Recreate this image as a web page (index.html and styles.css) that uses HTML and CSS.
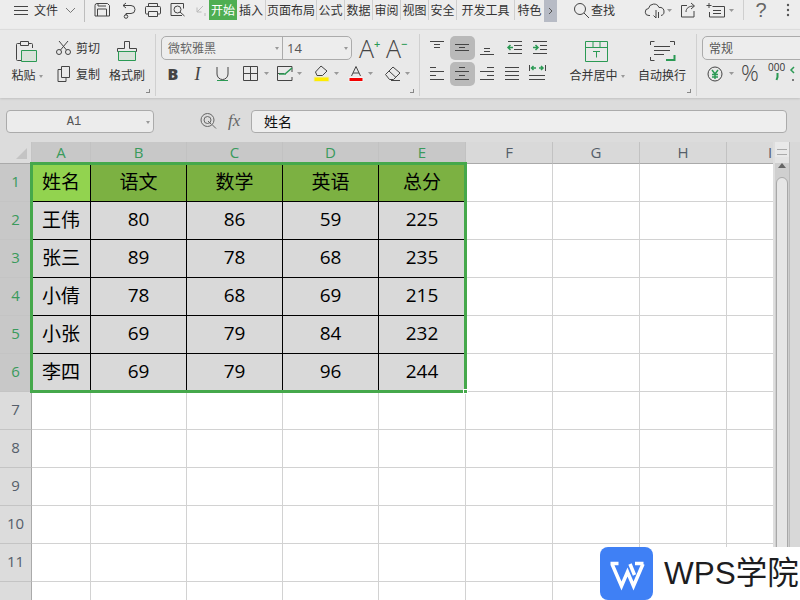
FILE: index.html
```html
<!DOCTYPE html>
<html lang="zh">
<head>
<meta charset="utf-8">
<title>WPS 表格</title>
<link rel="stylesheet" href="styles.css">
</head>
<body>
<div class="app">
  <header class="titlebar">
    <svg width="34" height="20" viewBox="0 0 34 20"><path d="M14 6.500h14M14 10.500h14M14 14.500h14"/></svg>
    <span class="tb-text">文件</span>
    <svg width="26" height="20" viewBox="0 0 26 20"><path class="lt" d="M8 8l4.500 4.500L17 8"/></svg>
    <i class="tb-sep"></i>
    <svg width="30" height="20" viewBox="0 0 30 20"><path d="M12 3.500h10.500l2 2v10.500h-14.500v-10.500a2 2 0 0 1 2-2zM12.500 16v-7h9v7M13 3.500v2.500h8"/></svg>
    <svg width="27" height="20" viewBox="0 0 27 20"><path d="M8 5.500h8a4 4 0 0 1 0 8h-5v2M11 3l-3 2.500 3 2.500"/><circle cx="11" cy="16.500" r="1.800"/></svg>
    <svg width="25" height="20" viewBox="0 0 25 20"><path d="M6.500 6.500v-3h9v3M6.500 14h-2a1 1 0 0 1-1-1v-5.500a1 1 0 0 1 1-1h13a1 1 0 0 1 1 1v5.500a1 1 0 0 1-1 1h-2M6.500 11.500h9v5h-9z"/></svg>
    <svg width="25" height="20" viewBox="0 0 25 20"><path d="M15 15.500h-11v-12h12.500v5"/><circle cx="10.500" cy="9.500" r="3.500"/><path d="M13 12l4.500 4"/></svg>
    <svg width="17" height="20" viewBox="0 0 17 20"><path class="faint" d="M11 6l-6 6M5 7.500V12h4.500M13 13v3"/></svg>
    <nav class="tabs">
      <span class="tab on">开始</span>
      <span class="tab">插入</span>
      <span class="tab wide4">页面布局</span>
      <span class="tab">公式</span>
      <span class="tab">数据</span>
      <span class="tab">审阅</span>
      <span class="tab">视图</span>
      <span class="tab">安全</span>
      <span class="tab wide5">开发工具</span>
      <span class="tab last">特色</span>
    </nav>
    <span class="more"><svg width="13" height="20" viewBox="0 0 13 20"><path d="M5 8l3 3-3 3"/></svg></span>
    <svg width="34" height="20" viewBox="0 0 34 20"><circle cx="23" cy="9" r="5.500"/><path d="M27 13l5 5"/></svg>
    <span class="tb-text">查找</span>
    <svg width="57" height="20" viewBox="0 0 57 20"><path d="M35 15.500h-1a3.500 3.500 0 0 1-.5-7 5.500 5.500 0 0 1 10.500-1 4 4 0 0 1 5 4.500c0 2-1 3-3 3.500M41 10v8M38.500 15.500l2.500 2.500M43.500 12v6"/><path class="tri" d="M52 9h5l-2.500 3z"/></svg>
    <svg width="28" height="20" viewBox="0 0 28 20"><path d="M15 5.500h-5.500v11.500h12.500v-6M14 12c0-4 3-6 8-6M19 3l3.500 3-3.500 3"/></svg>
    <svg width="42" height="20" viewBox="0 0 42 20"><path d="M9 8v-5M6.500 5.500h5M12.500 6.500h12v10.500h-15v-5M13 10.500h8M13 13.500h8"/><path class="tri" d="M29 9h5l-2.500 3z"/></svg>
    <i class="tb-sep short"></i>
    <span class="help">?</span>
    <svg width="24" height="20" viewBox="0 0 24 20"><circle class="dot" cx="12" cy="5" r="1.200"/><circle class="dot" cx="12" cy="10" r="1.200"/><circle class="dot" cx="12" cy="15" r="1.200"/></svg>
  </header>

  <section class="ribbon">
    <div class="group g1">
      <div class="col c-paste">
        <svg width="49" height="26" viewBox="0 0 49 26"><path d="M20.500 5.500h-3a1 1 0 0 0-1 1v15a1 1 0 0 0 1 1h4M32.500 10v-3.500a1 1 0 0 0-1-1h-3M20.500 3.500h8v4h-8z"/><path class="gfill" d="M21.500 12.500h15v11h-15z"/></svg>
        <span class="lbl">粘贴<b class="caret"></b></span>
      </div>
      <div class="col c-cut">
        <div class="cut-row">
          <svg width="15" height="18" viewBox="0 0 15 18"><circle cx="3" cy="13" r="2.500"/><circle cx="12" cy="13" r="2.500"/><path d="M4.500 11L12 2M10.500 11L3 2"/></svg>
          <span>剪切</span>
        </div>
        <div class="cut-row">
          <svg width="15" height="18" viewBox="0 0 15 18"><path d="M5.500 1.500h8v11h-8zM5.500 4.500h-3.500v12h8v-4"/></svg>
          <span>复制</span>
        </div>
      </div>
      <div class="col c-brush">
        <svg width="44" height="26" viewBox="0 0 44 26"><path d="M19.500 3.500h5v7h7v3h-19v-3h7z"/><path class="gfill" d="M13.500 13.500h17v9h-17z"/></svg>
        <span class="lbl">格式刷</span>
      </div>
      <i class="corner"></i>
    </div>
    <i class="r-sep"></i>
    <div class="group g2">
      <div class="font-row">
        <div class="combo">
          <span class="fname">微软雅黑<b class="caret"></b></span>
          <span class="fsize">14<b class="caret"></b></span>
        </div>
        <span class="big-a">A<sup class="plus">+</sup></span>
        <span class="big-a">A<sup class="plus">−</sup></span>
      </div>
      <div class="fmt-row">
        <span class="fb">B</span>
        <span class="fi">I</span>
        <svg width="25" height="18" viewBox="0 0 25 18"><path d="M7 2v7a5 5 0 0 0 11 0V2"/><path class="green" d="M7 15.500h11"/></svg>
        <svg width="40" height="18" viewBox="0 0 40 18"><path d="M8.500 1.500h14v14h-14zM15.500 1.500v14M8.500 8.500h14"/><path class="tri" d="M29 7h5l-2.500 3z"/></svg>
        <svg width="37" height="18" viewBox="0 0 37 18"><path d="M17 7V1.500H2.500V15.500H17V12M2.500 8.500H9"/><path class="green2" d="M4 9h7M10 9l7-6"/><path class="tri" d="M22 7h5l-2.500 3z"/></svg>
        <svg width="36" height="18" viewBox="0 0 36 18"><path d="M9 1l6 5-4.500 4.500H5L3.500 7z"/><path class="yellow" d="M2 12h15v4.500H2z"/><path class="tri" d="M22 7h5l-2.500 3z"/></svg>
        <svg width="36" height="18" viewBox="0 0 36 18"><path d="M3.500 11L8 1.500l4.500 9.500M5 8h6"/><path class="red" d="M1 12.500h14v4H1z"/><path class="tri" d="M20 7h5l-2.500 3z"/></svg>
        <svg width="31" height="18" viewBox="0 0 31 18"><path d="M1.500 9.500L9 2l7 6-6.500 6.500h-4zM5 6l7 6.500M7 15.500h9"/><path class="tri" d="M21 7h5l-2.500 3z"/></svg>
      </div>
      <i class="corner"></i>
    </div>
    <i class="r-sep"></i>
    <div class="group g3">
      <div class="align-grid">
        <svg width="25" height="24" viewBox="0 0 25 24"><path d="M5 5.500h14M9 8.500h6M9 11.500h6"/></svg>
        <svg class="active" width="25" height="24" viewBox="0 0 25 24"><path d="M5 8.500h14M9 11.500h6M5 14.500h14"/></svg>
        <svg width="25" height="24" viewBox="0 0 25 24"><path d="M9 12.500h6M9 15.500h6M5 18.500h14"/></svg>
        <svg width="25" height="24" viewBox="0 0 25 24"><path d="M8 5.500h14M14 9.500h8M14 13.500h8M8 17.500h14"/><path class="green2" d="M13 11.500H8M10.500 9L8 11.500l2.500 2.500"/></svg>
        <svg width="25" height="24" viewBox="0 0 25 24"><path d="M8 5.500h14M15 9.500h7M15 13.500h7M8 17.500h14"/><path class="green2" d="M8 11.500h5M10.500 9l2.500 2.500-2.500 2.500"/></svg>
        <svg width="25" height="24" viewBox="0 0 25 24"><path d="M5 5.500h6M5 9.500h14M5 13.500h6M5 17.500h14"/></svg>
        <svg class="active" width="25" height="24" viewBox="0 0 25 24"><path d="M9 5.500h6M5 9.500h14M9 13.500h6M5 17.500h14"/></svg>
        <svg width="25" height="24" viewBox="0 0 25 24"><path d="M12 5.500h7M5 9.500h14M12 13.500h7M5 17.500h14"/></svg>
        <svg width="25" height="24" viewBox="0 0 25 24"><path d="M5 5.500h14M5 9.500h14M5 13.500h14M5 17.500h14"/></svg>
        <svg width="25" height="24" viewBox="0 0 25 24"><path d="M4.500 3v6M20.500 3v6M4 13.500h16M4 17.500h16"/><path class="green2" d="M7 6h4M8.500 4L6.500 6l2 2M14 6h4M16 4l2 2-2 2"/></svg>
      </div>
      <div class="col c-merge">
        <svg width="80" height="26" viewBox="0 0 80 26"><path class="green" d="M28.500 3.500h22v20h-22zM28.500 9.500h22M36 3.500v6M43 3.500v6M36 13.500h7M39.500 13.500v6"/></svg>
        <span class="lbl">合并居中<b class="caret"></b></span>
      </div>
      <div class="col c-wrap">
        <svg width="50" height="26" viewBox="0 0 50 26"><path d="M13.500 7V3.500h4M33 3.500h4.500V7M13.500 19v3.500h4M17 8.500h16M17 12.500h16M17 16.500h10"/><path class="green3" d="M37.500 17v5H29"/></svg>
        <span class="lbl">自动换行</span>
      </div>
      <i class="corner"></i>
    </div>
    <i class="r-sep"></i>
    <div class="group g4">
      <div class="numfmt">常规</div>
      <div class="fmt-row">
        <svg width="24" height="18" viewBox="0 0 24 18"><circle cx="13" cy="9" r="7"/><path class="green2" d="M10 5l3 4 3-4M13 9v5M10 9.500h6M10 12h6"/></svg>
        <svg width="12" height="18" viewBox="0 0 12 18"><path class="tri" d="M3 7h5l-2.500 3z"/></svg>
        <span class="pct">%</span>
        <span class="thou">000<svg class="tick" width="8" height="8" viewBox="0 0 8 8"><path class="green3" d="M4.500 0v4l-1 3"/></svg></span>
        <svg width="12" height="18" viewBox="0 0 12 18"><path class="green2" d="M6 2L3 5l3 3"/><circle class="dot" cx="5" cy="15" r="1"/></svg>
      </div>
    </div>
  </section>

  <section class="formula">
    <div class="namebox">A1<b class="caret"></b></div>
    <svg class="zoom" width="68" height="23" viewBox="0 0 68 23"><circle cx="53.500" cy="10" r="6.500"/><circle cx="53.500" cy="10" r="3.500"/><path d="M58 14.500l4 4M54 11l3 3"/></svg>
    <span class="fx">fx</span>
    <div class="finput">姓名</div>
  </section>

  <main class="sheet">
    <div class="grid">
      <div class="corner-cell"><i class="tri-corner"></i></div>
      <div class="ch sel">A</div><div class="ch sel">B</div><div class="ch sel">C</div><div class="ch sel">D</div><div class="ch sel">E</div>
      <div class="ch">F</div><div class="ch">G</div><div class="ch">H</div><div class="ch">I</div>

      <div class="rh sel">1</div>
      <div class="c d head first">姓名</div><div class="c d head">语文</div><div class="c d head">数学</div><div class="c d head">英语</div><div class="c d head">总分</div>
      <div class="c"></div><div class="c"></div><div class="c"></div><div class="c"></div>

      <div class="rh sel">2</div>
      <div class="c d">王伟</div><div class="c d">80</div><div class="c d">86</div><div class="c d">59</div><div class="c d">225</div>
      <div class="c"></div><div class="c"></div><div class="c"></div><div class="c"></div>

      <div class="rh sel">3</div>
      <div class="c d">张三</div><div class="c d">89</div><div class="c d">78</div><div class="c d">68</div><div class="c d">235</div>
      <div class="c"></div><div class="c"></div><div class="c"></div><div class="c"></div>

      <div class="rh sel">4</div>
      <div class="c d">小倩</div><div class="c d">78</div><div class="c d">68</div><div class="c d">69</div><div class="c d">215</div>
      <div class="c"></div><div class="c"></div><div class="c"></div><div class="c"></div>

      <div class="rh sel">5</div>
      <div class="c d">小张</div><div class="c d">69</div><div class="c d">79</div><div class="c d">84</div><div class="c d">232</div>
      <div class="c"></div><div class="c"></div><div class="c"></div><div class="c"></div>

      <div class="rh sel">6</div>
      <div class="c d">李四</div><div class="c d">69</div><div class="c d">79</div><div class="c d">96</div><div class="c d">244</div>
      <div class="c"></div><div class="c"></div><div class="c"></div><div class="c"></div>

      <div class="rh">7</div>
      <div class="c"></div><div class="c"></div><div class="c"></div><div class="c"></div><div class="c"></div><div class="c"></div><div class="c"></div><div class="c"></div><div class="c"></div>
      <div class="rh">8</div>
      <div class="c"></div><div class="c"></div><div class="c"></div><div class="c"></div><div class="c"></div><div class="c"></div><div class="c"></div><div class="c"></div><div class="c"></div>
      <div class="rh">9</div>
      <div class="c"></div><div class="c"></div><div class="c"></div><div class="c"></div><div class="c"></div><div class="c"></div><div class="c"></div><div class="c"></div><div class="c"></div>
      <div class="rh">10</div>
      <div class="c"></div><div class="c"></div><div class="c"></div><div class="c"></div><div class="c"></div><div class="c"></div><div class="c"></div><div class="c"></div><div class="c"></div>
      <div class="rh">11</div>
      <div class="c"></div><div class="c"></div><div class="c"></div><div class="c"></div><div class="c"></div><div class="c"></div><div class="c"></div><div class="c"></div><div class="c"></div>
      <div class="rh"></div>
      <div class="c"></div><div class="c"></div><div class="c"></div><div class="c"></div><div class="c"></div><div class="c"></div><div class="c"></div><div class="c"></div><div class="c"></div>

      <div class="selection"><i class="handle"></i></div>
    </div>
    <aside class="vscroll">
      <div class="grip"></div>
      <div class="track">
        <i class="up"></i>
        <div class="thumb"></div>
      </div>
    </aside>
    <div class="rail"></div>
  </main>

  <div class="brand">
    <span class="brand-logo">
      <svg width="53" height="53" viewBox="0 0 53 53"><path d="M10.500 16.500h8M35 16.500h8.500M12 17l9.500 22 6-14 6 14 9.500-22M30 17l4.500 11"/></svg>
    </span>
    <span class="brand-text">WPS学院</span>
  </div>
</div>
</body>
</html>
```
FILE: styles.css
```css
* { box-sizing: border-box; }
html, body { margin: 0; padding: 0; }
body {
  width: 800px;
  height: 600px;
  overflow: hidden;
  font-family: "Noto Sans CJK SC", "Noto Sans", sans-serif;
  font-size: 12px;
  color: #333;
  background: #e9e9e9;
}
i, b { font-style: normal; font-weight: 400; }
svg { display: block; flex: none; fill: none; stroke: #444; stroke-width: 1; }
svg .lt { stroke: #777; }
svg .faint { stroke: #bbb; }
svg .tri { fill: #999; stroke: none; }
svg .dot { fill: #555; stroke: none; }
svg .green { stroke: #2b9a54; }
svg .green2 { stroke: #2b9a54; stroke-width: 1.500; }
svg .green3 { stroke: #2b9a54; stroke-width: 2; }
svg .gfill { stroke: #2b9a54; fill: #d9e3da; }
svg .yellow { fill: #ffec00; stroke: #e8e8c0; }
svg .red { fill: #f40000; stroke: #f4f4f4; }

.app { position: relative; width: 800px; height: 600px; overflow: hidden; }

/* title bar */
.titlebar {
  display: flex;
  align-items: flex-start;
  height: 29px;
  background: #ededed;
  line-height: 20px;
}
.tb-text { width: 24px; flex: none; }
.tb-sep { width: 1px; height: 22px; background: #bdbdbd; flex: none; }
.tb-sep.short { height: 20px; background: #cfcfcf; margin-left: 1px; }
.tabs { display: flex; height: 20px; }
.tab { width: 29px; text-align: center; border-right: 1px solid #cfcfcf; white-space: nowrap; }
.tab.on { width: 28px; background: #4fae52; color: #fff; border-right: 0; }
.tab.wide4 { width: 51px; }
.tab.wide5 { width: 58px; }
.tab:nth-child(4), .tab:nth-child(5), .tab:nth-child(6), .tab:nth-child(7), .tab:nth-child(8) { width: 28px; }
.tab.last { width: 29px; border-right: 0; }
.more { width: 13px; height: 22px; background: #b7bbc5; flex: none; }
.more svg { stroke: #555; }
.help { width: 32px; flex: none; text-align: center; font-family: "Liberation Sans", sans-serif; font-size: 20px; line-height: 20px; color: #666; padding-left: 2px; }

/* ribbon */
.ribbon {
  display: flex;
  height: 69px;
  background: #e9e9e9;
  border-top: 1px solid #dcdcdc;
  box-shadow: 0 1px 2px rgba(0, 0, 0, .12);
  position: relative;
}
.group { position: relative; flex: none; height: 68px; }
.g1 { width: 155px; display: flex; }
.g2 { width: 263px; padding: 6px 0 0 5px; }
.g3 { width: 276px; display: flex; padding-left: 5px; }
.g4 { flex: 1; min-width: 0; padding: 6px 0 0 5px; overflow: hidden; }
.r-sep { width: 1px; flex: none; margin: 4px 0 2px; background: #d0d0d0; }
.corner {
  position: absolute;
  right: 5px;
  bottom: 5px;
  width: 4px;
  height: 4px;
  border-right: 1px solid #888;
  border-bottom: 1px solid #888;
}
.col { display: flex; flex-direction: column; align-items: center; padding-top: 8px; flex: none; }
.lbl { display: block; margin-top: 1px; line-height: 20px; white-space: nowrap; }
.c-paste { width: 49px; }
.c-paste .lbl { margin-left: 5px; }
.c-cut { width: 56px; padding: 9px 0 0 7px; align-items: flex-start; gap: 8px; }
.c-brush { width: 44px; }
.c-merge { width: 80px; margin-left: 7px; }
.c-wrap { width: 50px; }
.cut-row { display: flex; align-items: center; gap: 5px; line-height: 18px; }
.caret {
  display: inline-block;
  width: 0;
  height: 0;
  margin-left: 3px;
  vertical-align: middle;
  border: 2.500px solid transparent;
  border-top: 3px solid #999;
  border-bottom: 0;
}

.font-row { display: flex; align-items: center; height: 24px; }
.combo {
  display: flex;
  width: 191px;
  height: 24px;
  background: #ededed;
  border: 1px solid #ababab;
  border-radius: 5px;
  line-height: 22px;
}
.fname { width: 121px; padding: 0 3px 0 6px; border-right: 1px solid #ababab; color: #666; display: flex; align-items: center; justify-content: space-between; }
.fsize { flex: 1; padding: 0 3px 0 4px; color: #555; display: flex; align-items: center; justify-content: space-between; font-family: "Open Sans", sans-serif; font-size: 13px; }
.big-a { width: 27px; padding-left: 7px; flex: none; font-family: "Open Sans", sans-serif; font-weight: 300; font-size: 25px; line-height: 24px; color: #444; white-space: nowrap; }
.plus { font-size: 11px; line-height: 0; color: #2b9a54; font-weight: 600; vertical-align: 10px; }
.fmt-row { display: flex; align-items: center; height: 18px; margin-top: 5px; }
.fb { width: 24px; flex: none; text-align: center; font-family: "Open Sans", sans-serif; font-weight: 800; font-size: 16px; line-height: 18px; color: #444; }
.fi { width: 25px; flex: none; text-align: center; font-family: "Liberation Serif", serif; font-style: italic; font-size: 18px; line-height: 18px; color: #444; }
.align-grid { display: grid; grid-template-columns: repeat(5, 25px); grid-template-rows: 24px 24px; gap: 2px 0; padding-top: 6px; flex: none; align-content: start; }
.align-grid .active { background: #b9b9b9; border-radius: 5px; }
.numfmt {
  width: 130px;
  height: 24px;
  padding-left: 6px;
  background: #ededed;
  border: 1px solid #ababab;
  border-radius: 5px;
  line-height: 22px;
  color: #555;
}
.pct { width: 24px; height: 18px; flex: none; text-align: center; font-family: "Open Sans", sans-serif; font-weight: 300; font-size: 22px; line-height: 14px; color: #444; }
.thou { width: 26px; height: 18px; flex: none; padding-left: 6px; margin-top: -6px; font-family: "Open Sans", sans-serif; font-size: 10px; line-height: 10px; color: #333; white-space: nowrap; }
.tick { margin: 1px 0 0 5px; }

/* formula bar */
.formula {
  display: flex;
  align-items: flex-start;
  height: 44px;
  padding: 12px 0 0 6px;
  background: #dcdcdc;
}
.namebox {
  display: flex;
  align-items: center;
  justify-content: center;
  width: 148px;
  height: 23px;
  padding-right: 12px;
  position: relative;
  background: #ececec;
  border: 1px solid #ababab;
  border-radius: 4px;
  font-family: "Liberation Mono", monospace;
  font-size: 12px;
  color: #555;
}
.namebox .caret { position: absolute; right: 3px; top: 10px; }
.zoom { stroke: #666; }
.fx { width: 29px; flex: none; padding-left: 6px; font-family: "Liberation Serif", serif; font-style: italic; font-size: 17px; line-height: 22px; color: #666; }
.finput {
  width: 536px;
  height: 23px;
  padding-left: 12px;
  background: #eee;
  border: 1px solid #ababab;
  border-radius: 4px;
  font-size: 14px;
  line-height: 21px;
  color: #111;
}

/* sheet */
.sheet { display: flex; height: 458px; background: #fff; }
.grid {
  position: relative;
  width: 773px;
  height: 458px;
  flex: none;
  overflow: hidden;
  display: grid;
  grid-template-columns: 32px 59px 96px 96px 96px 87px 87px 87px 87px 87px;
  grid-template-rows: 22px repeat(12, 38px);
  font-family: "Open Sans", "Noto Sans CJK SC", sans-serif;
}
.corner-cell { position: relative; background: #dcdcdc; border-right: 1px solid #c4c4c4; border-bottom: 1px solid #aaa; }
.tri-corner {
  position: absolute;
  left: 16px;
  top: 6px;
  border-left: 11px solid transparent;
  border-bottom: 11px solid #c4c4c4;
}
.ch {
  display: flex;
  align-items: center;
  justify-content: center;
  background: #d9d9d9;
  border-right: 1px solid #c2c2c2;
  border-bottom: 1px solid #aaa;
  font-size: 15px;
  color: #555e6a;
  padding-bottom: 1px;
}
.rh {
  display: flex;
  align-items: center;
  justify-content: center;
  background: #dcdcdc;
  border-right: 1px solid #aaa;
  border-bottom: 1px solid #c4c4c4;
  font-size: 15px;
  color: #555e6a;
  padding-bottom: 3px;
}
.ch.sel, .rh.sel { background: #c8c8c8; color: #3a9a5c; }
.c { border-right: 1px solid #d2d2d2; border-bottom: 1px solid #d2d2d2; background: #fff; }
.c.d {
  display: flex;
  align-items: center;
  justify-content: center;
  background: #d9d9d9;
  border-color: #000;
  font-size: 19px;
  color: #000;
  padding-bottom: 3px;
}
.c.head { background: #7cb142; }
.c.head.first { background: #92d34f; }
.selection {
  position: absolute;
  left: 30px;
  top: 20px;
  width: 437px;
  height: 231px;
  border: 3px solid #45a84b;
}
.handle {
  position: absolute;
  right: -4px;
  bottom: -4px;
  width: 5px;
  height: 5px;
  background: #45a84b;
  border: 1px solid #fff;
}

.vscroll { width: 16px; flex: none; background: #e4e4e4; border-left: 2px solid #dedede; }
.grip { height: 15px; padding-top: 7px; background: #e9e9e9; }
.grip::before { content: ""; display: block; margin: 0 2px; height: 4px; border-top: 1px solid #aaa; border-bottom: 1px solid #aaa; }
.track { height: 443px; background: #cfcfcf; padding: 0 1px; }
.up {
  display: block;
  width: 0;
  margin: 6px auto 0;
  border: 4px solid transparent;
  border-bottom: 5px solid #666;
  border-top: 0;
}
.thumb { margin-top: 9px; height: 423px; background: #e6e6e6; border: 1px solid #a8a8a8; border-radius: 7px 7px 0 0; }
.rail { flex: 1; background: #d8d8d8; border-left: 1px solid #bbb; }

/* watermark */
.brand {
  position: absolute;
  right: 0;
  bottom: 0;
  display: flex;
  align-items: center;
  width: 200px;
  height: 53px;
  background: #fff;
}
.brand-logo { width: 53px; height: 53px; flex: none; background: #3f80f5; border-radius: 8px; }
.brand-logo svg { stroke: #fff; stroke-width: 3.500; fill: none; }
.brand-text { margin-left: 11px; font-family: "Liberation Sans", "Noto Sans CJK SC", sans-serif; font-size: 31.500px; line-height: 53px; color: #1d1d1f; white-space: nowrap; }
```
